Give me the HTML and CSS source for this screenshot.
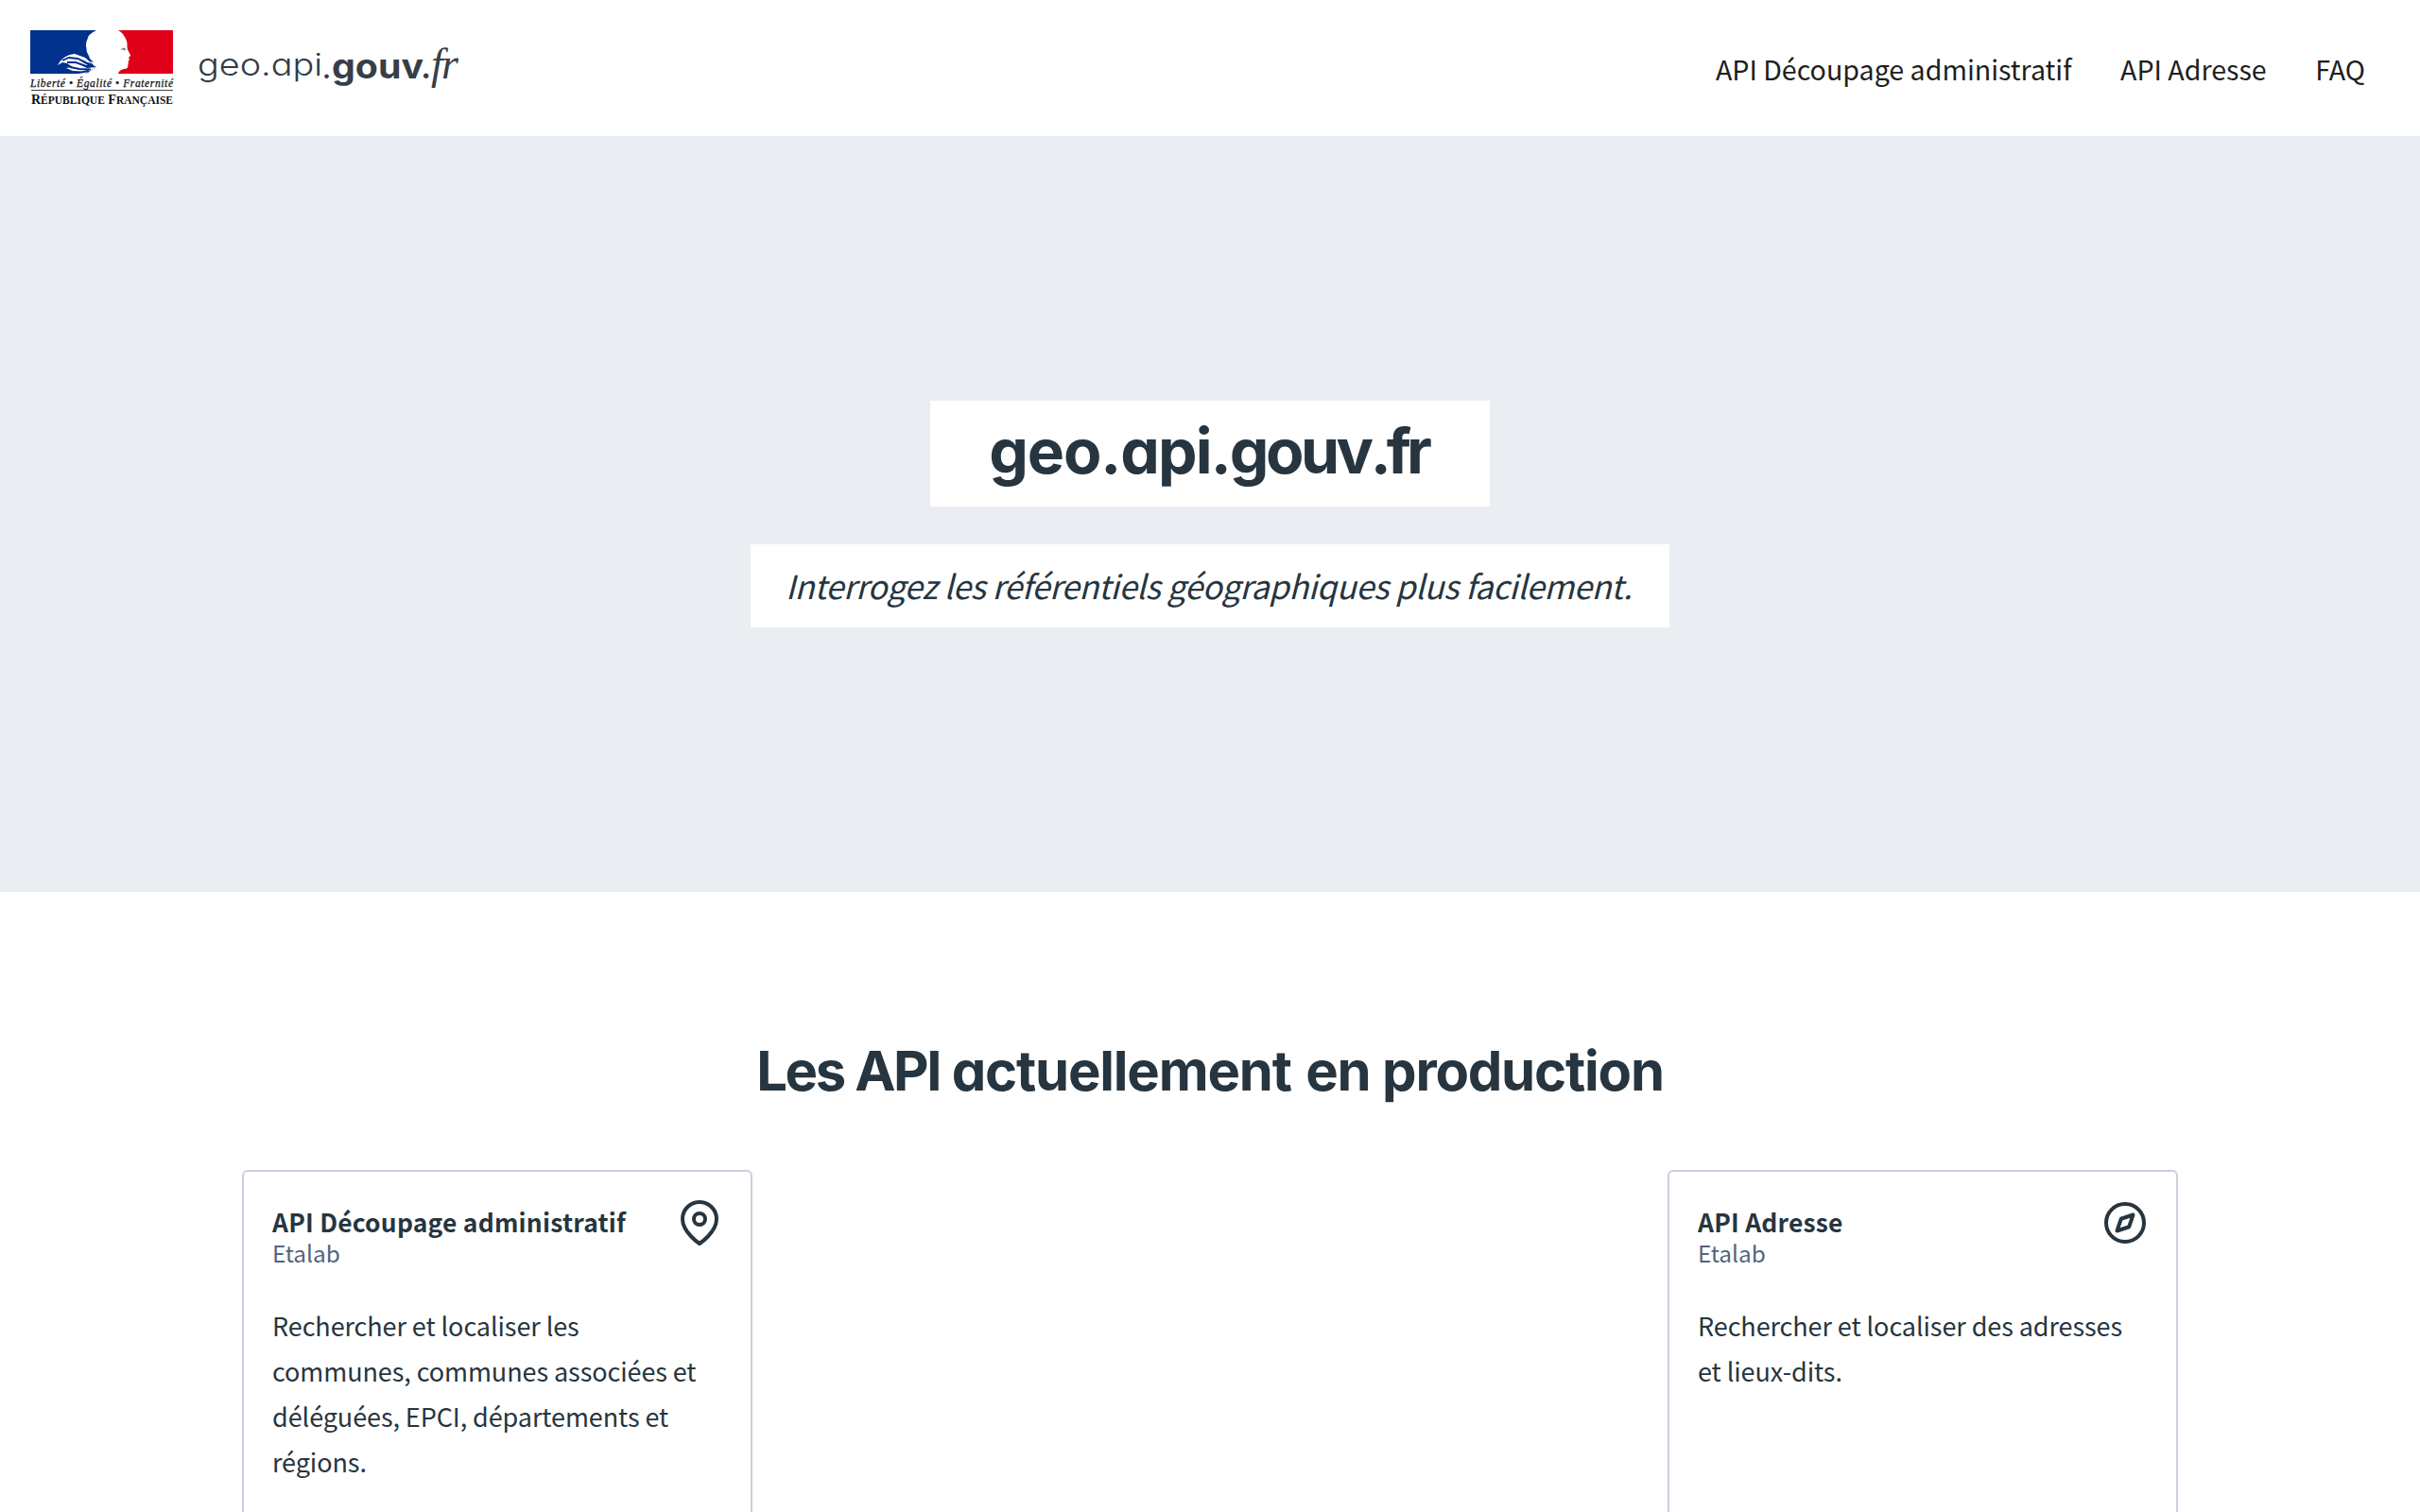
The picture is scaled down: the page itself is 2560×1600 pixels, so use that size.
FILE: index.html
```html
<!DOCTYPE html>
<html lang="fr">
<head>
<meta charset="utf-8">
<title>geo.api.gouv.fr</title>
<link rel="stylesheet" href="styles.css">
</head>
<body>
<header class="header">
  <svg class="brand" viewBox="0 0 520 144" role="img" aria-label="geo.api.gouv.fr">
    <path fill="#00318d" d="M32 32H102C99 34 94 36 93 40C92 43 91 44 91 49C92 52 91 54 93 57L95 62L99 66L95 65L100 70L102 71L97 74L93 77L90 78H32Z"/>
    <path fill="#fff" d="M61 69C65 62 70 58 79 57L90 61L97 67L84 64L93 69L86 69L92 72L102 71L95 75L90 78H83L89 76L77 75L70 72L77 71L71 67L66 66Z"/>
    <path fill="none" stroke="#00318d" stroke-width="1.9" d="M66 64L73 61L82 62L91 66M71 66L80 66L94 71M74 71L84 73L96 73.5M76 76.5L86 76.5L94 75"/>
    <path fill="#e1001a" d="M125 32H183V78H125C126 74 130 73 134 72.5C136 71 135 68 136 66L135.500 65L137 63L136 61L138 59C138 57 135 54 134.500 50C135 46 134 43 133 41C131 37 129 34 125 32Z"/>
    <path fill="#777" d="M127 52.5L131 50.5L133 51.5L132 54L131 52.5Z"/>
    <g fill="#111">
      <text class="brand-motto" x="32" y="91.5" textLength="151">Liberté • Égalité • Fraternité</text>
      <rect x="33" y="95" width="150" height="1" fill="#444"/>
      <text class="brand-state" x="33" y="110" textLength="150" lengthAdjust="spacingAndGlyphs">R<tspan class="sc">ÉPUBLIQUE</tspan> F<tspan class="sc">RANÇAISE</tspan></text>
    </g>
    <g fill="#2f3c47">
      <text class="brand-geo" x="209" y="80" textLength="132" lengthAdjust="spacingAndGlyphs">geo.api</text>
      <text class="brand-dot" x="341" y="82.5" fill="#383e48">.</text>
      <text class="brand-gouv" x="351" y="82.5" textLength="97" lengthAdjust="spacingAndGlyphs" fill="#383e48">gouv</text>
      <text class="brand-fr" x="446" y="83" textLength="39" fill="#383e48">.fr</text>
    </g>
  </svg>
  <nav class="nav">
    <a class="nav-link">API Découpage administratif</a>
    <a class="nav-link">API Adresse</a>
    <a class="nav-link">FAQ</a>
  </nav>
</header>
<section class="hero">
  <h1 class="hero-title"><span class="wide">geo.</span><span class="mid">api.</span>gouv<span class="tight">.fr</span></h1>
  <p class="hero-tagline">Interrogez les référentiels géographiques plus facilement.</p>
</section>
<main class="section">
  <h2 class="section-title"><span class="tight">Les API</span> <span class="lead-word">actuellement</span> en production</h2>
  <div class="cards">
    <article class="card">
      <div class="card-head">
        <div>
          <h3 class="card-title">API Découpage administratif</h3>
          <div class="card-owner">Etalab</div>
        </div>
        <svg class="icon" viewBox="0 0 24 24"><path d="M21 10c0 7-9 13-9 13s-9-6-9-13a9 9 0 0 1 18 0z"/><circle cx="12" cy="10" r="3"/></svg>
      </div>
      <p class="card-text">Rechercher et localiser les communes, communes associées et déléguées, EPCI, départements et régions.</p>
    </article>
    <article class="card">
      <div class="card-head">
        <div>
          <h3 class="card-title">API Adresse</h3>
          <div class="card-owner">Etalab</div>
        </div>
        <svg class="icon" viewBox="0 0 24 24"><circle cx="12" cy="12" r="10"/><path d="M16.24 7.76l-2.12 6.36-6.36 2.12 2.12-6.36 6.36-2.12z"/></svg>
      </div>
      <p class="card-text">Rechercher et localiser des adresses et lieux-dits.</p>
    </article>
  </div>
</main>
</body>
</html>
```
FILE: styles.css
```css
* { box-sizing: border-box; }
body {
  margin: 0;
  height: 1600px;
  overflow: hidden;
  background: #fff;
  color: #26353f;
  font-family: "Noto Sans CJK JP", "Noto Sans", sans-serif;
}
h1, h2, h3, p { margin: 0; }

.header {
  display: flex;
  justify-content: space-between;
  align-items: center;
  height: 144px;
  padding-right: 58px;
}
.brand { width: 520px; height: 144px; }
.brand-motto { font: italic 11.5px "Liberation Serif", serif; stroke: #111; stroke-width: 0.25px; }
.brand-state { font: bold 14px "Liberation Serif", serif; }
.sc { font-size: 11.5px; }
.brand-geo { font: 300 33px Inter, sans-serif; font-feature-settings: "cv11"; }
.brand-dot { font: 700 27px Inter, sans-serif; }
.brand-gouv { font: 700 36px Inter, sans-serif; }
.brand-fr { font: italic 46px "Liberation Serif", serif; }
.nav { display: flex; gap: 51.5px; padding-top: 2px; }
.nav-link { font-size: 28.6px; line-height: 48px; color: #1e1e1e; white-space: nowrap; }

.hero {
  display: flex;
  flex-direction: column;
  align-items: center;
  justify-content: center;
  gap: 40px;
  height: 800px;
  background: #eaeef3;
}
.hero-title, .section-title {
  font-family: Inter, sans-serif;
  font-weight: 700;
  font-feature-settings: "cv11";
  white-space: nowrap;
}
.hero-title {
  width: 592px;
  height: 112px;
  padding-right: 4px;
  background: #fff;
  font-size: 66px;
  line-height: 106px;
  letter-spacing: -3.5px;
  text-align: center;
}
.hero-title .wide { letter-spacing: -1.1px; }
.hero-title .mid { letter-spacing: -1.9px; }
.hero-title .tight { letter-spacing: -5px; }
.hero-tagline {
  width: 972px;
  height: 88px;
  padding-right: 3px;
  background: #fff;
  font-size: 34.6px;
  line-height: 86px;
  letter-spacing: -0.46px;
  font-style: italic;
  text-align: center;
  white-space: nowrap;
}

.section { padding: 149px 256px 0; }
.section-title { font-size: 58px; line-height: 80px; letter-spacing: -1.2px; text-align: center; }
.section-title .tight { letter-spacing: -2.4px; }
.section-title .lead-word { margin-right: 3px; }
.cards { display: flex; justify-content: space-between; margin-top: 65px; }
.card {
  width: 540px;
  height: 420px;
  padding: 30px;
  border: 2px solid #c9d1df;
  border-radius: 6px;
}
.card-head { display: flex; justify-content: space-between; align-items: flex-start; }
.card-title { font-size: 26.4px; line-height: 32px; letter-spacing: 0.23px; padding-top: 7px; font-weight: 700; }
.card-owner { font-size: 24.4px; line-height: 32px; padding-top: 1px; color: #53657d; }
.card-text { margin-top: 37px; font-size: 27px; line-height: 48px; letter-spacing: -0.08px; }
.icon {
  width: 48px;
  height: 48px;
  fill: none;
  stroke: #26353f;
  stroke-width: 2;
  stroke-linecap: round;
  stroke-linejoin: round;
}
```
